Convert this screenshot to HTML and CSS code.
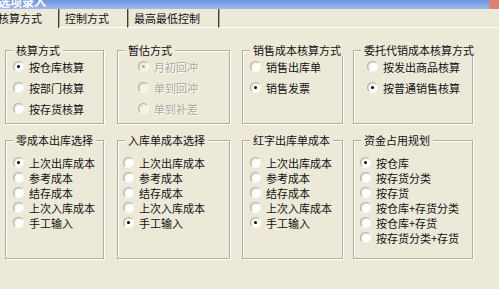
FILE: index.html
```html
<!DOCTYPE html>
<html lang="zh-CN">
<head>
<meta charset="UTF-8">
<title>选项录入</title>
<link rel="stylesheet" href="styles.css">
</head>
<body>

<div class="titlebar">
    <span class="title-text">选项录入</span>
    <span class="close-btn"></span>
</div>

<div class="tabs">
    <div class="tab tab-active">核算方式</div>
    <div class="tab">控制方式</div>
    <div class="tab">最高最低控制</div>
    <div class="tab-fill"></div>
</div>

<div class="panel">
    <div class="row row-top">
        <div class="group g1">
            <div class="group-title">核算方式</div>
            <div class="opts">
                <label class="opt"><span class="radio checked"></span>按仓库核算</label>
                <label class="opt"><span class="radio"></span>按部门核算</label>
                <label class="opt"><span class="radio"></span>按存货核算</label>
            </div>
        </div>
        <div class="group g2">
            <div class="group-title">暂估方式</div>
            <div class="opts disabled">
                <label class="opt"><span class="radio checked"></span>月初回冲</label>
                <label class="opt"><span class="radio"></span>单到回冲</label>
                <label class="opt"><span class="radio"></span>单到补差</label>
            </div>
        </div>
        <div class="group g3">
            <div class="group-title">销售成本核算方式</div>
            <div class="opts">
                <label class="opt"><span class="radio"></span>销售出库单</label>
                <label class="opt"><span class="radio checked"></span>销售发票</label>
            </div>
        </div>
        <div class="group g4">
            <div class="group-title">委托代销成本核算方式</div>
            <div class="opts">
                <label class="opt"><span class="radio"></span>按发出商品核算</label>
                <label class="opt"><span class="radio checked"></span>按普通销售核算</label>
            </div>
        </div>
    </div>

    <div class="row row-bottom">
        <div class="group g1">
            <div class="group-title">零成本出库选择</div>
            <div class="opts">
                <label class="opt"><span class="radio checked"></span>上次出库成本</label>
                <label class="opt"><span class="radio"></span>参考成本</label>
                <label class="opt"><span class="radio"></span>结存成本</label>
                <label class="opt"><span class="radio"></span>上次入库成本</label>
                <label class="opt"><span class="radio"></span>手工输入</label>
            </div>
        </div>
        <div class="group g2">
            <div class="group-title">入库单成本选择</div>
            <div class="opts">
                <label class="opt"><span class="radio"></span>上次出库成本</label>
                <label class="opt"><span class="radio"></span>参考成本</label>
                <label class="opt"><span class="radio"></span>结存成本</label>
                <label class="opt"><span class="radio"></span>上次入库成本</label>
                <label class="opt"><span class="radio checked"></span>手工输入</label>
            </div>
        </div>
        <div class="group g3">
            <div class="group-title">红字出库单成本</div>
            <div class="opts">
                <label class="opt"><span class="radio"></span>上次出库成本</label>
                <label class="opt"><span class="radio"></span>参考成本</label>
                <label class="opt"><span class="radio"></span>结存成本</label>
                <label class="opt"><span class="radio"></span>上次入库成本</label>
                <label class="opt"><span class="radio checked"></span>手工输入</label>
            </div>
        </div>
        <div class="group g4">
            <div class="group-title">资金占用规划</div>
            <div class="opts">
                <label class="opt"><span class="radio checked"></span>按仓库</label>
                <label class="opt"><span class="radio"></span>按存货分类</label>
                <label class="opt"><span class="radio"></span>按存货</label>
                <label class="opt"><span class="radio"></span>按仓库+存货分类</label>
                <label class="opt"><span class="radio"></span>按仓库+存货</label>
                <label class="opt"><span class="radio"></span>按存货分类+存货</label>
            </div>
        </div>
    </div>
</div>

</body>
</html>
```

FILE: styles.css
```css
body {
    margin: 0;
    padding: 0;
    background: #ece9d8;
    font-family: "Noto Sans CJK SC", "Liberation Sans", sans-serif;
    font-size: 11px;
    color: #111;
    height: 289px;
    overflow: hidden;
}

/* title bar, only its lower edge is visible */
.titlebar {
    display: flex;
    height: 9px;
    overflow: hidden;
    background: linear-gradient(#6f95e2, #9fbaec);
}
.title-text {
    color: #fff;
    font-size: 12px;
    line-height: 12px;
    margin-top: -4px;
    margin-left: -2px;
    font-weight: bold;
}
.close-btn {
    margin-left: auto;
    width: 10px;
    height: 9px;
    background: #d9846f;
    border-bottom-left-radius: 2px;
}

/* tab strip */
.tabs {
    display: flex;
    height: 19px;
}
.tab {
    padding: 0 18px 0 6px;
    line-height: 18px;
    border-right: 1px solid #3c3b36;
    box-shadow: 1px 0 0 #a9a696;
    border-bottom: 1px solid #fff;
    white-space: nowrap;
}
.tab-active {
    margin-left: -8px;
    padding-right: 16px;
    border-bottom: none;
}
.tab-fill {
    flex: 1;
    border-bottom: 1px solid #fff;
}

/* group boxes */
.row {
    display: flex;
}
.row-top {
    margin-top: 22px;
}
.row-bottom {
    margin-top: 16px;
}
.group {
    box-sizing: border-box;
    border: 1px solid #b0ad9e;
    box-shadow: 1px 1px 0 #fff, inset 1px 1px 0 #fff;
}
.row-top .group {
    height: 74px;
}
.row-bottom .group {
    height: 119px;
}
.g1 { width: 99px; margin-left: 5px; }
.g2 { width: 113px; margin-left: 13px; }
.g3 { width: 101px; margin-left: 12px; }
.g4 { width: 120px; margin-left: 10px; }

.group-title {
    width: fit-content;
    margin: -7px 0 0 7px;
    padding: 0 3px;
    line-height: 12px;
    background: #ece9d8;
    white-space: nowrap;
}

.opts {
    display: flex;
    flex-direction: column;
}
.row-top .opt {
    height: 21px;
}
.row-bottom .opts {
    padding-top: 9px;
}
.row-bottom .opt {
    height: 15px;
}
.row-top .g1 .opts { padding-left: 7px; }
.row-top .g2 .opts { padding-left: 20px; }
.row-top .g3 .opts { padding-left: 7px; }
.row-top .g4 .opts { padding-left: 13px; }
.row-bottom .g1 .opts { padding-left: 7px; }
.row-bottom .g2 .opts { padding-left: 5px; }
.row-bottom .g3 .opts { padding-left: 7px; }
.row-bottom .g4 .opts { padding-left: 6px; }

.opt {
    display: flex;
    align-items: center;
    white-space: nowrap;
}

/* classic sunken radio button */
.radio {
    box-sizing: border-box;
    width: 11px;
    height: 11px;
    margin-right: 5px;
    border-radius: 50%;
    background: #fff;
    border: 1px solid;
    border-color: #b4b1a2 #f8f7f2 #f8f7f2 #b4b1a2;
    box-shadow: inset 1px 1px 0 #dedbcd;
    display: flex;
    align-items: center;
    justify-content: center;
    flex: none;
}
.radio.checked::after {
    content: "";
    width: 3px;
    height: 3px;
    border-radius: 50%;
    background: #000;
}

.disabled .opt {
    color: #aca899;
    text-shadow: 1px 1px 0 #fff;
}
.disabled .radio {
    background: #f2f1ea;
}
.disabled .radio.checked::after {
    background: #aca899;
}
```
